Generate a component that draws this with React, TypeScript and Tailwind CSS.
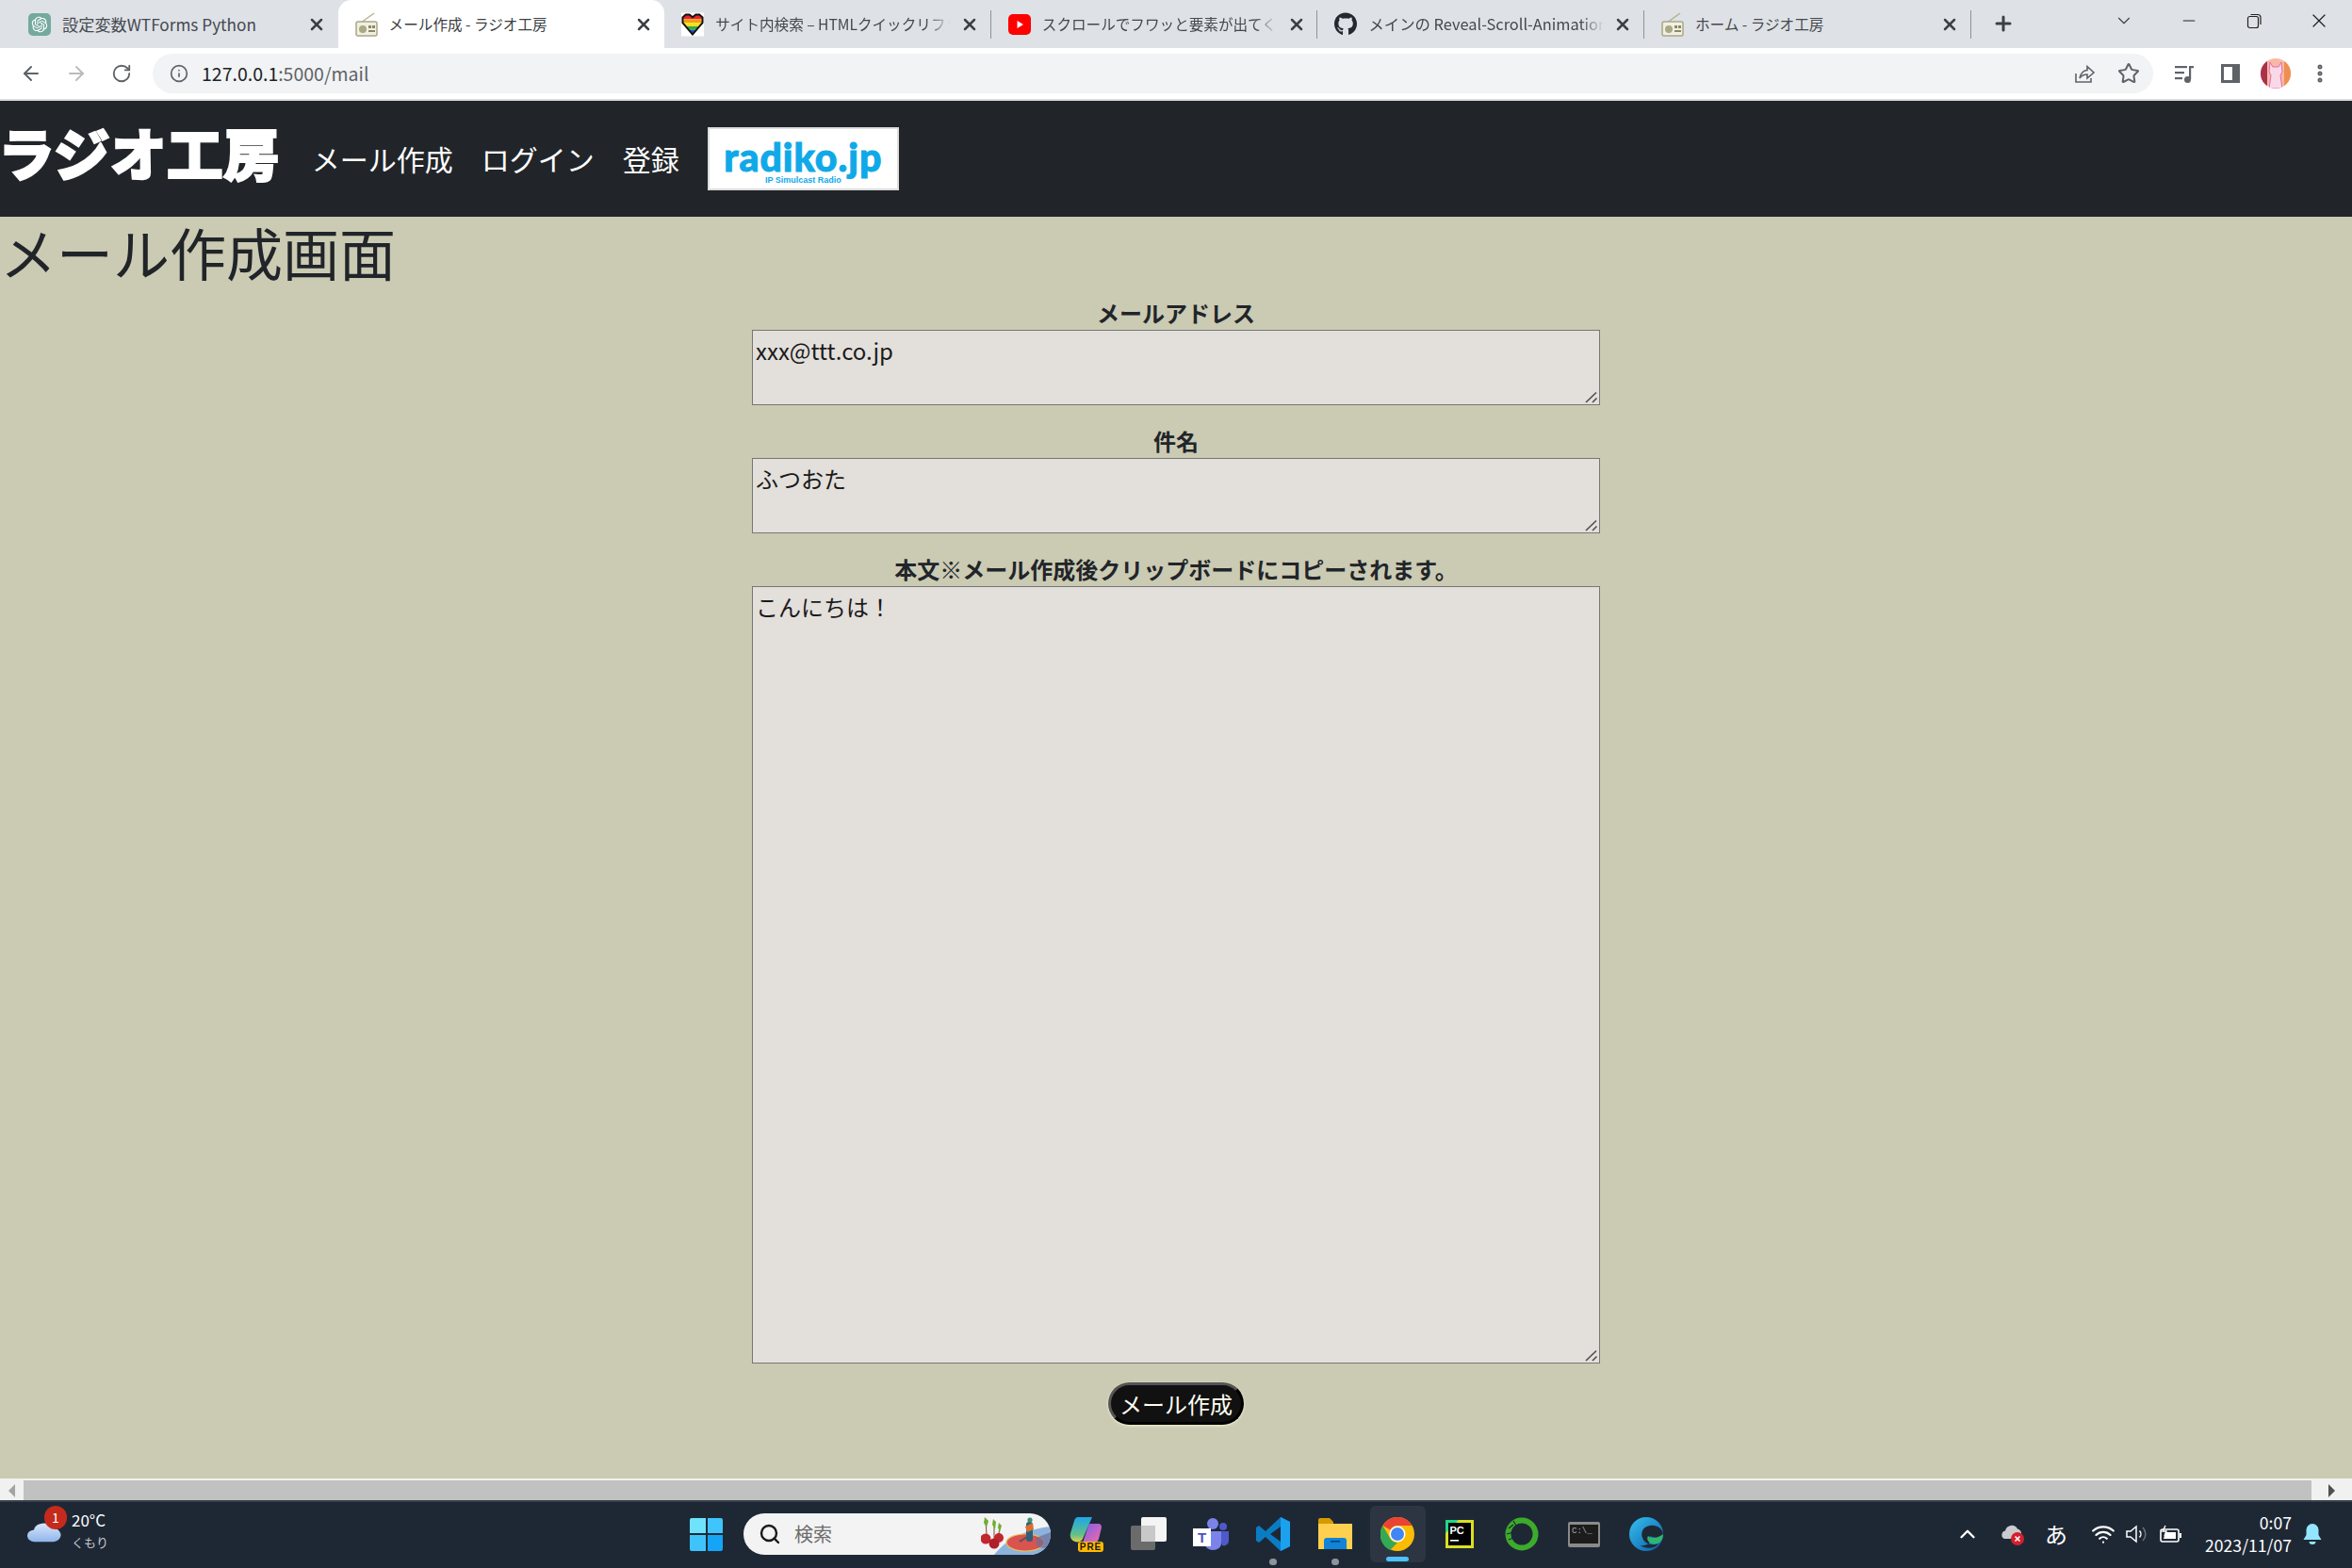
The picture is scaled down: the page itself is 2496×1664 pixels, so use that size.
import { ArrowLeft, ArrowRight, ChevronDown, ChevronUp, EllipsisVertical, Info, Minus, Plus, RotateCw, Search, Star, Wifi, X } from "lucide-react"
import { FaGithub } from "react-icons/fa"
import { RiOpenaiFill } from "react-icons/ri"
import type { ReactNode } from "react"

const jp = "font-['Noto_Sans_CJK_JP','Noto_Sans',sans-serif]"

function RadioFavicon() {
  return (
    <svg width="24" height="26" viewBox="0 0 24 26">
      <path d="M6 11 L20 1" stroke="#b5b294" strokeWidth="1.5" />
      <rect x="1" y="10" width="22" height="15" rx="2" fill="#f0efe2" stroke="#aaa885" strokeWidth="1.5" />
      <circle cx="8" cy="18" r="4" fill="#aaa885" />
      <rect x="14" y="14" width="3" height="3" fill="#8b8968" />
      <rect x="18" y="14" width="3" height="3" fill="#8b8968" />
      <rect x="14" y="19" width="7" height="2" fill="#8b8968" />
    </svg>
  )
}

function HeartFavicon() {
  return (
    <svg width="25" height="26" viewBox="0 0 25 26">
      <rect width="25" height="26" fill="#fff" />
      <clipPath id="heart-clip">
        <path d="M12.5 24 L1.5 11 V5 L5 2 H9 L12.5 5 L16 2 H20 L23.5 5 V11 Z" />
      </clipPath>
      <g clipPath="url(#heart-clip)">
        <rect y="0" width="25" height="7" fill="#e8262a" />
        <rect y="7" width="25" height="4" fill="#f59a1c" />
        <rect y="11" width="25" height="4" fill="#f7e11b" />
        <rect y="15" width="25" height="4" fill="#35a945" />
        <rect y="19" width="25" height="6" fill="#2b4cc4" />
      </g>
      <path d="M12.5 24 L1.5 11 V5 L5 2 H9 L12.5 5 L16 2 H20 L23.5 5 V11 Z" fill="none" stroke="#111" strokeWidth="2" />
    </svg>
  )
}

function YoutubeFavicon() {
  return (
    <svg width="24" height="26" viewBox="0 0 24 26">
      <rect x="0" y="2" width="24" height="22" rx="5" fill="#ff0000" />
      <path d="M9.5 9 L16 13 L9.5 17 Z" fill="#fff" />
    </svg>
  )
}

function Tab({ icon, title, active, fade, size = "text-[15.6px]" }: { icon: ReactNode; title: string; active?: boolean; fade?: boolean; size?: string }) {
  return (
    <div className={`relative flex h-[51px] w-[346.6px] shrink-0 items-center pl-[18px] pr-[12px] ${active ? "rounded-t-[14px] bg-white" : ""}`}>
      <div className="flex w-[24px] shrink-0 items-center justify-center">{icon}</div>
      <div
        className={`ml-[12px] w-[250px] overflow-hidden whitespace-nowrap ${size} ${active ? "text-[#3c4043]" : "text-[#45494e]"} ${fade ? "[mask-image:linear-gradient(to_right,black_90%,transparent)]" : ""}`}
      >
        {title}
      </div>
      <X size={20} strokeWidth={3} className="ml-[10px] shrink-0 text-[#3c4043]" />
    </div>
  )
}

function Separator() {
  return <div className="absolute right-0 top-[11px] h-[30px] w-px bg-[#8f9297]" />
}

function BrowserChrome() {
  return (
    <div className={`${jp} shrink-0`}>
      <div className="flex h-[51px] items-start bg-[#dee1e6] pl-[12px]">
        <Tab size="text-[17.2px]" icon={<RiOpenaiFill size={24} className="rounded-[5px] bg-[#74aa9c] p-[2px] text-white" />} title="設定変数WTForms Python" />
        <Tab active icon={<RadioFavicon />} title="メール作成 - ラジオ工房" />
        <div className="relative">
          <Tab fade icon={<HeartFavicon />} title="サイト内検索 – HTMLクイックリファレンス" />
          <Separator />
        </div>
        <div className="relative">
          <Tab fade icon={<YoutubeFavicon />} title="スクロールでフワッと要素が出てくるアニメーション" />
          <Separator />
        </div>
        <div className="relative">
          <Tab fade size="text-[16.4px]" icon={<FaGithub size={25} className="text-[#24292f]" />} title="メインの Reveal-Scroll-Animation" />
          <Separator />
        </div>
        <div className="relative">
          <Tab icon={<RadioFavicon />} title="ホーム - ラジオ工房" />
          <Separator />
        </div>
        <Plus size={24} strokeWidth={3} className="ml-[22px] mt-[13px] shrink-0 text-[#3c4043]" />
        <ChevronDown size={22} strokeWidth={1.2} className="ml-[105px] mt-[11px] shrink-0 text-[#3c4043]" />
        <Minus size={20} strokeWidth={1.3} className="ml-[48px] mt-[12px] shrink-0 text-[#222]" />
        <svg width="18" height="18" viewBox="0 0 18 18" className="ml-[50px] mt-[13px] shrink-0" fill="none" stroke="#222" strokeWidth="1.2">
          <rect x="2.5" y="4.5" width="11" height="12" rx="2" />
          <path d="M5.5 2.5 H13 a3 3 0 0 1 3 3 V13" />
        </svg>
        <X size={24} strokeWidth={1.2} className="ml-[48px] mt-[10px] shrink-0 text-[#222]" />
      </div>
      <div className="flex h-[54px] items-center bg-white text-[#5f6368]">
        <div className="flex w-[162px] shrink-0 items-center pl-[21px]">
          <ArrowLeft size={24} strokeWidth={2} />
          <ArrowRight size={24} strokeWidth={2} className="ml-[24px] text-[#babcbe]" />
          <RotateCw size={22} strokeWidth={2} className="ml-[25px]" />
        </div>
        <div className="flex h-[42px] w-[2123px] shrink-0 items-center rounded-full bg-[#f1f3f4] pl-[18px]">
          <Info size={20} strokeWidth={2} />
          <div className="ml-[14px] text-[19.5px] text-[#5f6368]">
            <span className="text-[#202124]">127.0.0.1</span>:5000/mail
          </div>
          <svg width="24" height="24" viewBox="0 0 24 24" className="ml-auto" fill="none" stroke="#5f6368" strokeWidth="1.6">
            <path d="M3 12 V21 H19 V17" />
            <path d="M7 17 C8 11 12 8.5 15 8.5 V4.5 L22 11 L15 17 V13 C12 13 9 14 7 17 Z" />
          </svg>
          <Star size={24} strokeWidth={2} className="ml-[23px] mr-[14px]" />
        </div>
        <svg width="24" height="24" viewBox="0 0 24 24" className="ml-[21px] shrink-0" fill="#5f6368">
          <rect x="2" y="4" width="13" height="2.2" />
          <rect x="2" y="10" width="10" height="2.2" />
          <rect x="2" y="16" width="8" height="2.2" />
          <rect x="17" y="4" width="2.2" height="14" />
          <rect x="17" y="4" width="5" height="2.2" />
          <circle cx="15.5" cy="18.5" r="3.5" />
        </svg>
        <svg width="22" height="22" viewBox="0 0 22 22" className="ml-[26px] shrink-0">
          <rect x="1" y="1" width="20" height="20" fill="#5f6368" />
          <rect x="4" y="4" width="9" height="14" fill="#fff" />
        </svg>
        <svg width="32" height="32" viewBox="0 0 32 32" className="ml-[21px] shrink-0">
          <clipPath id="avatar-clip"><circle cx="16" cy="16" r="16" /></clipPath>
          <g clipPath="url(#avatar-clip)">
            <rect width="32" height="32" fill="#f7b9a6" />
            <rect x="0" y="0" width="7" height="32" fill="#a8324a" />
            <rect x="25" y="0" width="7" height="32" fill="#ef8f4f" />
            <path d="M10 4 L13 9 H19 L22 4 L23 14 L21 18 L23 32 H9 L11 18 L9 14 Z" fill="#f9d9e8" stroke="#e86aa6" strokeWidth="1" />
          </g>
        </svg>
        <EllipsisVertical size={24} strokeWidth={3} className="ml-[19px] shrink-0" />
      </div>
      <div className="h-[2px] bg-[#dcdcdc]" />
    </div>
  )
}

function Navbar() {
  return (
    <nav className={`${jp} flex h-[123px] shrink-0 items-center gap-[30px] bg-[#212529] text-[30px] text-white`}>
      <div className="mb-[16px] ml-[-2px] mr-[4px] text-[60px] font-black leading-none [-webkit-text-stroke:2px_white]">ラジオ工房</div>
      <div>メール作成</div>
      <div>ログイン</div>
      <div>登録</div>
      <div className="flex h-[67px] w-[203px] flex-col items-center border-2 border-[#dddddd] bg-white pt-[11px] text-[#0fa9e8]">
        <div className="font-['Lato',sans-serif] text-[41px] font-black leading-[38px] tracking-[1px] [-webkit-text-stroke:1px_#0fa9e8]">radiko.jp</div>
        <div className="font-['Liberation_Sans',sans-serif] text-[9px] font-bold leading-[10px]">IP Simulcast Radio</div>
      </div>
    </nav>
  )
}

function Field({ label, value, height }: { label: string; value: string; height: string }) {
  return (
    <div className="flex flex-col items-center">
      <label className="text-[24px] font-bold leading-[36px] text-[#212529]">{label}</label>
      <div className="relative">
        <textarea
          readOnly
          defaultValue={value}
          className={`${height} block w-[900px] resize-none border border-[#767676] bg-[#e3dfdb] px-[3px] py-[3px] text-[24px] leading-[36px] text-[#1a1a1a] outline-none`}
        />
        {/* resize grip, darker than what the sandbox browser draws */}
        <svg width="16" height="16" viewBox="0 0 16 16" className="pointer-events-none absolute bottom-px right-px" stroke="#4d4d4d" strokeWidth="1.6">
          <path d="M2 14 L13 3.5" />
          <path d="M9 14 L13.5 9.5" />
        </svg>
      </div>
    </div>
  )
}

function MailForm() {
  return (
    <main className={`${jp} min-h-0 flex-1 bg-[#cbcab3] text-[#212529]`}>
      <h1 className="mt-px text-[60px] font-normal leading-[72px]">メール作成画面</h1>
      <form className="mt-[11px] flex flex-col gap-[20px]">
        <Field label="メールアドレス" value="xxx@ttt.co.jp" height="h-[80px]" />
        <Field label="件名" value="ふつおた" height="h-[80px]" />
        <Field label="本文※メール作成後クリップボードにコピーされます。" value="こんにちは！" height="h-[825px]" />
        <div className="flex justify-center">
          <button
            type="button"
            className="h-[45px] w-[144px] rounded-full border-[3px] border-b-black border-l-[#555555] border-r-black border-t-[#555555] bg-[#111111] text-[24px] leading-none text-[#fffdf0] shadow-[0_1px_3px_#f6f3d6]"
          >
            メール作成
          </button>
        </div>
      </form>
    </main>
  )
}

function ScrollBar() {
  return (
    <div className="shrink-0">
      <div className="h-[2px] bg-[#f1f1f1]" />
      <div className="flex h-[21px] items-center bg-[#f1f1f1]">
        <div className="flex w-[25px] justify-center">
          <div className="h-0 w-0 border-y-[7px] border-r-[7px] border-y-transparent border-r-[#a3a3a3]" />
        </div>
        <div className="h-full w-[2428px] bg-[#c1c1c1]" />
        <div className="flex flex-1 justify-center">
          <div className="h-0 w-0 border-y-[7px] border-l-[7px] border-y-transparent border-l-[#505050]" />
        </div>
      </div>
    </div>
  )
}

function Cloud() {
  return (
    <svg width="36" height="22" viewBox="0 0 36 26" preserveAspectRatio="none">
      <defs>
        <linearGradient id="cloud-grad" x1="0" y1="0" x2="0" y2="1">
          <stop offset="0" stopColor="#d9e6fb" />
          <stop offset="1" stopColor="#8fb5ea" />
        </linearGradient>
      </defs>
      <path d="M8 25 a7.5 7.5 0 0 1 -1 -15 a10 10 0 0 1 19 -2 a8.5 8.5 0 0 1 2 17 Z" fill="url(#cloud-grad)" />
    </svg>
  )
}

function SearchArt() {
  return (
    <svg width="74" height="44" viewBox="0 0 74 44" className="absolute right-0 top-0">
      <clipPath id="art-clip"><path d="M0 0 H52 a22 22 0 0 1 0 44 H0 Z" /></clipPath>
      <g clipPath="url(#art-clip)">
        <path d="M14 44 C26 28 50 16 74 14 V44 Z" fill="#8cb3dc" />
        <ellipse cx="47" cy="31" rx="20" ry="9" fill="#d9534f" stroke="#e8c15a" strokeWidth="1.2" />
        <path d="M58 26 L74 20 V38 L60 36 Z" fill="#6c6f9b" opacity="0.7" />
      </g>
      <rect x="48" y="9" width="7" height="21" rx="3" fill="#2f5f78" />
      <path d="M47 14 L55 10 L56 17 L49 20 Z" fill="#d8702f" />
      <circle cx="52" cy="7" r="2.6" fill="#3f8f79" />
      <path d="M49 25 L41 30" stroke="#555" strokeWidth="2" />
      <path d="M5 8 L6 22 M14 8 L14 27 M20 13 L19 22" stroke="#7a4a2c" strokeWidth="1" fill="none" />
      <path d="M4 4 L8 8 L6 15 L3 10 Z M13 6 L16 9 L15 17 L12 12 Z M19 10 L22 13 L20 20 L18 15 Z" fill="#6fae2f" />
      <circle cx="5" cy="27" r="5.5" fill="#c2272d" />
      <circle cx="19" cy="26" r="5" fill="#c2272d" />
      <circle cx="14" cy="32" r="5.5" fill="#b01f28" />
    </svg>
  )
}

function WindowsLogo() {
  return (
    <div className="grid h-[35px] w-[35px] shrink-0 grid-cols-2 gap-[2px]">
      <div className="rounded-tl-[2px] bg-[#6ee3fb]" />
      <div className="rounded-tr-[2px] bg-[#3fc5fb]" />
      <div className="rounded-bl-[2px] bg-[#3ec4fb]" />
      <div className="rounded-br-[2px] bg-[#14a5f7]" />
    </div>
  )
}

function CopilotIcon() {
  return (
    <svg width="36" height="38" viewBox="0 0 36 38">
      <defs>
        <linearGradient id="cop-a" x1="0" y1="0" x2="0" y2="1">
          <stop offset="0" stopColor="#1fa6e8" />
          <stop offset="0.7" stopColor="#5fc08a" />
          <stop offset="1" stopColor="#e0d34a" />
        </linearGradient>
        <linearGradient id="cop-b" x1="0" y1="0" x2="1" y2="1">
          <stop offset="0" stopColor="#7f5ce8" />
          <stop offset="1" stopColor="#ef6ea8" />
        </linearGradient>
      </defs>
      <path d="M9 1 H24 L14 24 C13 27 9 28 6 27 C2 26 0 22 1 18 L5 5 C6 2 7 1 9 1 Z" fill="url(#cop-a)" />
      <path d="M21 8 H31 C33 8 34 10 34 12 L31 24 C30 27 28 28 25 28 H14 L20 10 Z" fill="url(#cop-b)" />
      <rect x="9" y="27" width="27" height="11" rx="3" fill="#ffb900" />
      <text x="22.5" y="36" textAnchor="middle" fontSize="10" fontWeight="700" letterSpacing="1" fill="#1a1a1a" fontFamily="Liberation Sans, sans-serif">PRE</text>
    </svg>
  )
}

function TaskViewIcon() {
  return (
    <svg width="38" height="36" viewBox="0 0 38 36">
      <rect x="0" y="9" width="26" height="26" rx="2" fill="#6b6b6b" />
      <rect x="11" y="0" width="27" height="26" rx="2" fill="#f4f4f4" />
      <rect x="11" y="9" width="15" height="17" fill="#c8c8c8" />
    </svg>
  )
}

function TeamsIcon() {
  return (
    <svg width="38" height="34" viewBox="0 0 38 34">
      <circle cx="21" cy="6" r="6" fill="#7b83eb" />
      <circle cx="32" cy="9" r="4" fill="#5059c9" />
      <path d="M26 14 H38 V24 C38 28 34 30 31 29 Z" fill="#5059c9" />
      <path d="M12 14 H30 V27 C30 31 26 34 21 34 C16 34 12 30 12 25 Z" fill="#7b83eb" />
      <rect x="0" y="11" width="19" height="19" fill="#fff" />
      <text x="9.5" y="26" textAnchor="middle" fontSize="15" fontWeight="700" fill="#4b53bc" fontFamily="Liberation Sans, sans-serif">T</text>
    </svg>
  )
}

function VscodeIcon() {
  return (
    <svg width="36" height="36" viewBox="0 0 36 36">
      <path d="M26 0 L36 5 V31 L26 36 L10 21 L3 27 L0 25 V11 L3 9 L10 15 Z M26 10 L15 18 L26 26 Z" fill="#0a7cc4" fillRule="evenodd" />
      <path d="M26 0 L36 5 V31 L26 36 Z" fill="#1ba1ee" />
    </svg>
  )
}

function ExplorerIcon() {
  return (
    <svg width="36" height="34" viewBox="0 0 36 34">
      <path d="M0 2 a2 2 0 0 1 2 -2 H12 L16 4 V10 H0 Z" fill="#d69a00" />
      <path d="M0 6 H36 V33 H0 Z" fill="#ffd04f" />
      <path d="M6 33 V24 a3 3 0 0 1 3 -3 H27 a3 3 0 0 1 3 3 V33 Z" fill="#0f84d8" />
      <rect x="13" y="24" width="10" height="1.5" fill="#063e70" />
    </svg>
  )
}

function ChromeIcon() {
  return (
    <svg width="36" height="36" viewBox="0 0 36 36">
      <circle cx="18" cy="18" r="18" fill="#fbbc04" />
      <path d="M18 0 A18 18 0 0 1 33.6 9 H18 A9 9 0 0 0 10.2 13.5 L2.4 9 A18 18 0 0 1 18 0 Z" fill="#ea4335" />
      <path d="M2.4 9 L10.2 22.5 A9 9 0 0 0 18 27 L10.2 35 A18 18 0 0 1 2.4 9 Z" fill="#34a853" />
      <circle cx="18" cy="18" r="8.5" fill="#fff" />
      <circle cx="18" cy="18" r="7" fill="#4285f4" />
    </svg>
  )
}

function PycharmIcon() {
  return (
    <svg width="30" height="30" viewBox="0 0 30 30">
      <rect width="30" height="30" fill="#d9e021" />
      <path d="M0 0 H14 L0 14 Z" fill="#21d789" />
      <rect x="3" y="3" width="24" height="24" fill="#000" />
      <text x="4.5" y="15" fontSize="11" fontWeight="700" fill="#fff" fontFamily="Liberation Sans, sans-serif">PC</text>
      <rect x="5" y="21" width="9" height="1.6" fill="#fff" />
    </svg>
  )
}

function RingIcon() {
  return (
    <svg width="36" height="36" viewBox="0 0 36 36">
      <circle cx="18" cy="18" r="14.5" fill="none" stroke="#3cab2b" strokeWidth="6" />
      <path d="M4 12 L9 8 M2 18 L9 16 M4 24 L9 22 M9 4 L12 9" stroke="#1e2835" strokeWidth="1.2" />
    </svg>
  )
}

function TerminalIcon() {
  return (
    <svg width="34" height="27" viewBox="0 0 34 27">
      <rect width="34" height="27" rx="2" fill="#8a8a8a" />
      <rect x="2" y="3" width="30" height="20" fill="#1c1c1c" />
      <text x="4" y="12" fontSize="9" fill="#a8a8a8" fontFamily="Liberation Mono, monospace">C:\_</text>
    </svg>
  )
}

function EdgeIcon() {
  return (
    <svg width="36" height="36" viewBox="0 0 36 36">
      <defs>
        <linearGradient id="edge-a" x1="0" y1="0" x2="1" y2="1">
          <stop offset="0" stopColor="#35c1f1" />
          <stop offset="1" stopColor="#0c59a4" />
        </linearGradient>
      </defs>
      <circle cx="18" cy="18" r="18" fill="url(#edge-a)" />
      <path d="M36 20 C36 11 28 8 22 9 C14 10 12 17 14 22 C16 28 24 31 31 28 C27 34 17 34 12 30 C20 31 25 26 22 20 C26 22 32 23 36 20 Z" fill="#1e2835" />
      <path d="M36 18 C36 26 30 30 24 28 C20 27 18 23 20 20 C23 23 30 23 36 18 Z" fill="#2fb56f" />
    </svg>
  )
}

function DockItem({ children, dot, active }: { children: ReactNode; dot?: boolean; active?: boolean }) {
  return (
    <div className="relative flex h-[36px] w-[36px] shrink-0 items-center justify-center">
      {active && <div className="absolute left-[-11px] top-[-12px] h-[60px] w-[59px] rounded-[6px] bg-[#2c3541]" />}
      <div className="relative">{children}</div>
      {dot && <div className="absolute left-[14px] top-[44px] h-[7px] w-[8px] rounded-full bg-[#8f949b]" />}
      {active && <div className="absolute left-[6px] top-[42px] h-[5px] w-[24px] rounded-full bg-[#4cc2ff]" />}
    </div>
  )
}

function Taskbar() {
  return (
    <footer className={`${jp} flex h-[72px] shrink-0 items-center border-t-2 border-[#3a404a] bg-[#1e2835] pb-[2px] text-white`}>
      <div className="relative ml-[29px] flex w-[84px] shrink-0 items-center whitespace-nowrap">
        <div className="mb-[4px] flex">
          <Cloud />
        </div>
        <div className="absolute left-[18px] top-[-3px] flex h-[25px] w-[24px] items-center justify-center rounded-full bg-[#c42b1c] text-[14px]">1</div>
        <div className="mb-[6px] ml-[11px] leading-[24px]">
          <div className="text-[17px]">20°C</div>
          <div className="text-[13px] text-[#c5c8cc]">くもり</div>
        </div>
      </div>
      <div className="ml-[619px] flex shrink-0 items-center">
        <WindowsLogo />
        <div className="relative ml-[22px] flex h-[44px] w-[326px] items-center rounded-full bg-[#f3f3f3] pl-[16px] text-[#1a1a1a]">
          <Search size={24} strokeWidth={2.4} />
          <span className="ml-[14px] text-[20px] text-[#6b6b6b]">検索</span>
          <SearchArt />
        </div>
        <div className="ml-[20px] flex items-center gap-[30px]">
          <DockItem><CopilotIcon /></DockItem>
          <DockItem><TaskViewIcon /></DockItem>
          <DockItem><TeamsIcon /></DockItem>
          <DockItem dot><VscodeIcon /></DockItem>
          <DockItem dot><ExplorerIcon /></DockItem>
          <DockItem active><ChromeIcon /></DockItem>
          <DockItem><PycharmIcon /></DockItem>
          <DockItem><RingIcon /></DockItem>
          <DockItem><TerminalIcon /></DockItem>
          <DockItem><EdgeIcon /></DockItem>
        </div>
      </div>
      <div className="ml-auto flex items-center pr-[32px]">
        <ChevronUp size={26} strokeWidth={2.2} />
        <svg width="26" height="24" viewBox="0 0 26 24" className="ml-[22px]">
          <path d="M4 17 a4.5 4.5 0 0 1 1 -8.5 a7 7 0 0 1 13 -2 a5 5 0 0 1 4 6 V17 Z" fill="#c9cbce" />
          <circle cx="18" cy="17" r="7" fill="#d3202e" />
          <path d="M15.5 14.5 L20.5 19.5 M20.5 14.5 L15.5 19.5" stroke="#fff" strokeWidth="1.6" />
        </svg>
        <span className="ml-[21px] text-[24px] leading-none">あ</span>
        <Wifi size={26} strokeWidth={2} className="ml-[25px]" />
        <svg width="26" height="24" viewBox="0 0 26 24" className="ml-[10px]" fill="none" stroke="#fff" strokeWidth="1.5">
          <path d="M2 9 H6 L12 4 V20 L6 15 H2 Z" />
          <path d="M15.5 8.5 a5 5 0 0 1 0 7" />
          <path d="M19 5 a10 10 0 0 1 0 14" stroke="#6b7178" />
        </svg>
        <svg width="24" height="20" viewBox="0 0 24 20" className="ml-[11px]" fill="none" stroke="#fff" strokeWidth="1.6">
          <rect x="1" y="5" width="19" height="13" rx="2" />
          <rect x="21" y="9" width="2" height="5" fill="#fff" stroke="none" />
          <path d="M4 15 L6 8 H17 V15 Z" fill="#fff" stroke="none" />
          <path d="M6 1 L3 7 H7 L5 12" stroke="#fff" strokeWidth="1.4" />
        </svg>
        <div className="ml-[24px] text-right text-[17.6px] leading-[24px]">
          <div>0:07</div>
          <div>2023/11/07</div>
        </div>
        <svg width="20" height="24" viewBox="0 0 20 24" className="ml-[12px]" fill="#93e6ff">
          <path d="M10 1 a6.5 6.5 0 0 1 6.5 6.5 V13 L19.5 18 H0.5 L3.5 13 V7.5 A6.5 6.5 0 0 1 10 1 Z" />
          <path d="M6.5 20 H13.5 a3.5 3 0 0 1 -7 0 Z" />
        </svg>
      </div>
    </footer>
  )
}

export default function App() {
  return (
    <div className="flex h-[1664px] w-[2496px] flex-col overflow-hidden">
      <BrowserChrome />
      <Navbar />
      <MailForm />
      <ScrollBar />
      <Taskbar />
    </div>
  )
}
